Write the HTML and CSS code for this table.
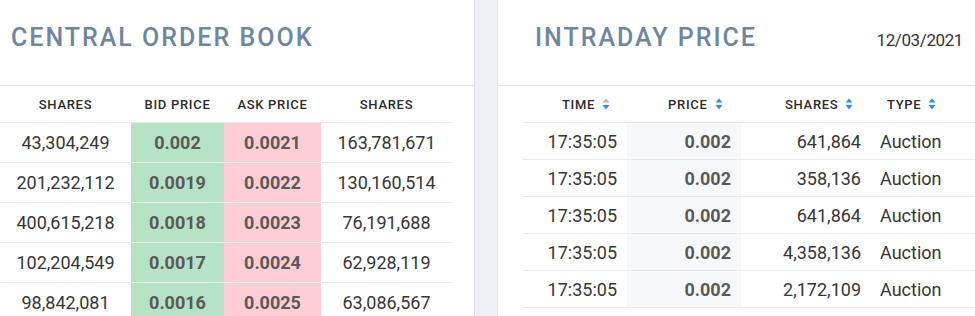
FILE: index.html
```html
<!DOCTYPE html>
<html>
<head>
<meta charset="utf-8">
<link rel="stylesheet" href="styles.css">
</head>
<body>
<div class="page">
  <section class="panel panel-left">
    <div class="panel-head">
      <h2 class="title">CENTRAL ORDER BOOK</h2>
    </div>
    <div class="book">
      <div class="book-row book-header">
        <div class="cell">SHARES</div>
        <div class="cell">BID PRICE</div>
        <div class="cell">ASK PRICE</div>
        <div class="cell">SHARES</div>
      </div>
      <div class="book-row">
        <div class="cell">43,304,249</div>
        <div class="cell bid">0.002</div>
        <div class="cell ask">0.0021</div>
        <div class="cell">163,781,671</div>
      </div>
      <div class="book-row">
        <div class="cell">201,232,112</div>
        <div class="cell bid">0.0019</div>
        <div class="cell ask">0.0022</div>
        <div class="cell">130,160,514</div>
      </div>
      <div class="book-row">
        <div class="cell">400,615,218</div>
        <div class="cell bid">0.0018</div>
        <div class="cell ask">0.0023</div>
        <div class="cell">76,191,688</div>
      </div>
      <div class="book-row">
        <div class="cell">102,204,549</div>
        <div class="cell bid">0.0017</div>
        <div class="cell ask">0.0024</div>
        <div class="cell">62,928,119</div>
      </div>
      <div class="book-row">
        <div class="cell">98,842,081</div>
        <div class="cell bid">0.0016</div>
        <div class="cell ask">0.0025</div>
        <div class="cell">63,086,567</div>
      </div>
    </div>
  </section>
  <div class="gutter"></div>
  <section class="panel panel-right">
    <div class="panel-head head-right">
      <h2 class="title">INTRADAY PRICE</h2>
      <span class="date">12/03/2021</span>
    </div>
    <div class="trades">
      <div class="trade-row trade-header">
        <div class="th th-time">TIME <svg class="sort" viewBox="0 0 8 12" width="8" height="12"><path class="up grey" d="M4 0.5 L7.5 4.5 L0.5 4.5 Z"/><path class="down" d="M4 11.5 L7.5 7 L0.5 7 Z"/></svg></div>
        <div class="th th-price">PRICE <svg class="sort" viewBox="0 0 8 12" width="8" height="12"><path class="up" d="M4 0.5 L7.5 4.5 L0.5 4.5 Z"/><path class="down" d="M4 11.5 L7.5 7 L0.5 7 Z"/></svg></div>
        <div class="th th-shares">SHARES <svg class="sort" viewBox="0 0 8 12" width="8" height="12"><path class="up" d="M4 0.5 L7.5 4.5 L0.5 4.5 Z"/><path class="down" d="M4 11.5 L7.5 7 L0.5 7 Z"/></svg></div>
        <div class="th th-type">TYPE <svg class="sort" viewBox="0 0 8 12" width="8" height="12"><path class="up" d="M4 0.5 L7.5 4.5 L0.5 4.5 Z"/><path class="down" d="M4 11.5 L7.5 7 L0.5 7 Z"/></svg></div>
      </div>
      <div class="trade-row">
        <div class="td t-time">17:35:05</div>
        <div class="td t-price">0.002</div>
        <div class="td t-shares">641,864</div>
        <div class="td t-type">Auction</div>
      </div>
      <div class="trade-row">
        <div class="td t-time">17:35:05</div>
        <div class="td t-price">0.002</div>
        <div class="td t-shares">358,136</div>
        <div class="td t-type">Auction</div>
      </div>
      <div class="trade-row">
        <div class="td t-time">17:35:05</div>
        <div class="td t-price">0.002</div>
        <div class="td t-shares">641,864</div>
        <div class="td t-type">Auction</div>
      </div>
      <div class="trade-row">
        <div class="td t-time">17:35:05</div>
        <div class="td t-price">0.002</div>
        <div class="td t-shares">4,358,136</div>
        <div class="td t-type">Auction</div>
      </div>
      <div class="trade-row">
        <div class="td t-time">17:35:05</div>
        <div class="td t-price">0.002</div>
        <div class="td t-shares">2,172,109</div>
        <div class="td t-type">Auction</div>
      </div>
    </div>
  </section>
</div>
</body>
</html>
```
FILE: styles.css
```css
html, body {
  margin: 0;
  padding: 0;
  background: #ffffff;
  overflow: hidden;
}
body {
  font-family: Roboto, "Liberation Sans", sans-serif;
  color: #333333;
}
.page {
  display: flex;
  width: 975px;
  height: 316px;
  overflow: hidden;
}
.panel {
  background: #ffffff;
}
.panel-left {
  width: 474px;
  flex: none;
}
.panel-right {
  flex: 1;
  min-width: 0;
}
.gutter {
  width: 24px;
  flex: none;
  background: #eef0f3;
  box-shadow: inset 1px 0 0 #e2e5e9, inset -1px 0 0 #e3e8ef;
}
.panel-head {
  height: 86px;
  box-sizing: border-box;
  padding: 23px 0 0 11px;
  border-bottom: 1px solid #e1e4e8;
}
.head-right {
  display: flex;
  align-items: baseline;
  justify-content: space-between;
  padding-left: 37px;
  padding-right: 12px;
}
.title {
  margin: 0;
  font-size: 25px;
  line-height: 30px;
  font-weight: 500;
  letter-spacing: 2px;
  color: #6e86a0;
}
.date {
  font-size: 17px;
  color: #333333;
  letter-spacing: -0.4px;
}

/* order book */
.book {
  width: 452px;
}
.book-row {
  display: grid;
  grid-template-columns: 131px 93px 97px 131px;
  height: 40px;
}
.book-row .cell {
  display: flex;
  align-items: center;
  justify-content: center;
  border-bottom: 1px solid #e8e9eb;
  font-size: 18px;
  color: #363636;
}
.book-header {
  height: 37px;
}
.book-header .cell,
.trade-header .th {
  font-size: 13px;
  font-weight: 500;
  letter-spacing: 0.7px;
  color: #2b2b2b;
}
.book-row .bid,
.book-row .ask {
  font-weight: 700;
  color: #5a5a5a;
  border-bottom-color: #eef3f0;
}
.bid {
  background: #b6e2c5;
}
.ask {
  background: #ffcdd4;
  border-bottom-color: #f8eef0;
}

/* intraday trades */
.trades {
  margin-left: 25px;
}
.trade-row {
  display: grid;
  grid-template-columns: 104px 114px 129px 1fr;
  height: 37px;
}
.trade-header {
  height: 37px;
}
.trade-row .td,
.trade-row .th {
  display: flex;
  align-items: center;
  border-bottom: 1px solid #e8e9eb;
  font-size: 18px;
}
.trade-row .th {
  font-size: 13px;
  gap: 7px;
}
.th-time { padding-left: 39px; }
.th-price { padding-left: 41px; }
.th-shares { padding-left: 44px; }
.th-type { padding-left: 17px; }
.sort {
  flex: none;
  margin-top: -1px;
}
.sort path {
  fill: #2b8ef0;
}
.sort path.grey {
  fill: #b3b7bd;
}
.td {
  color: #363636;
}
.t-time {
  justify-content: flex-end;
  padding-right: 10px;
}
.t-price {
  justify-content: flex-end;
  padding-right: 10px;
  background: #f6f8fa;
  font-weight: 700;
  color: #5a5a5a;
}
.t-shares {
  justify-content: flex-end;
  padding-right: 9px;
}
.t-type {
  padding-left: 10px;
}
```
